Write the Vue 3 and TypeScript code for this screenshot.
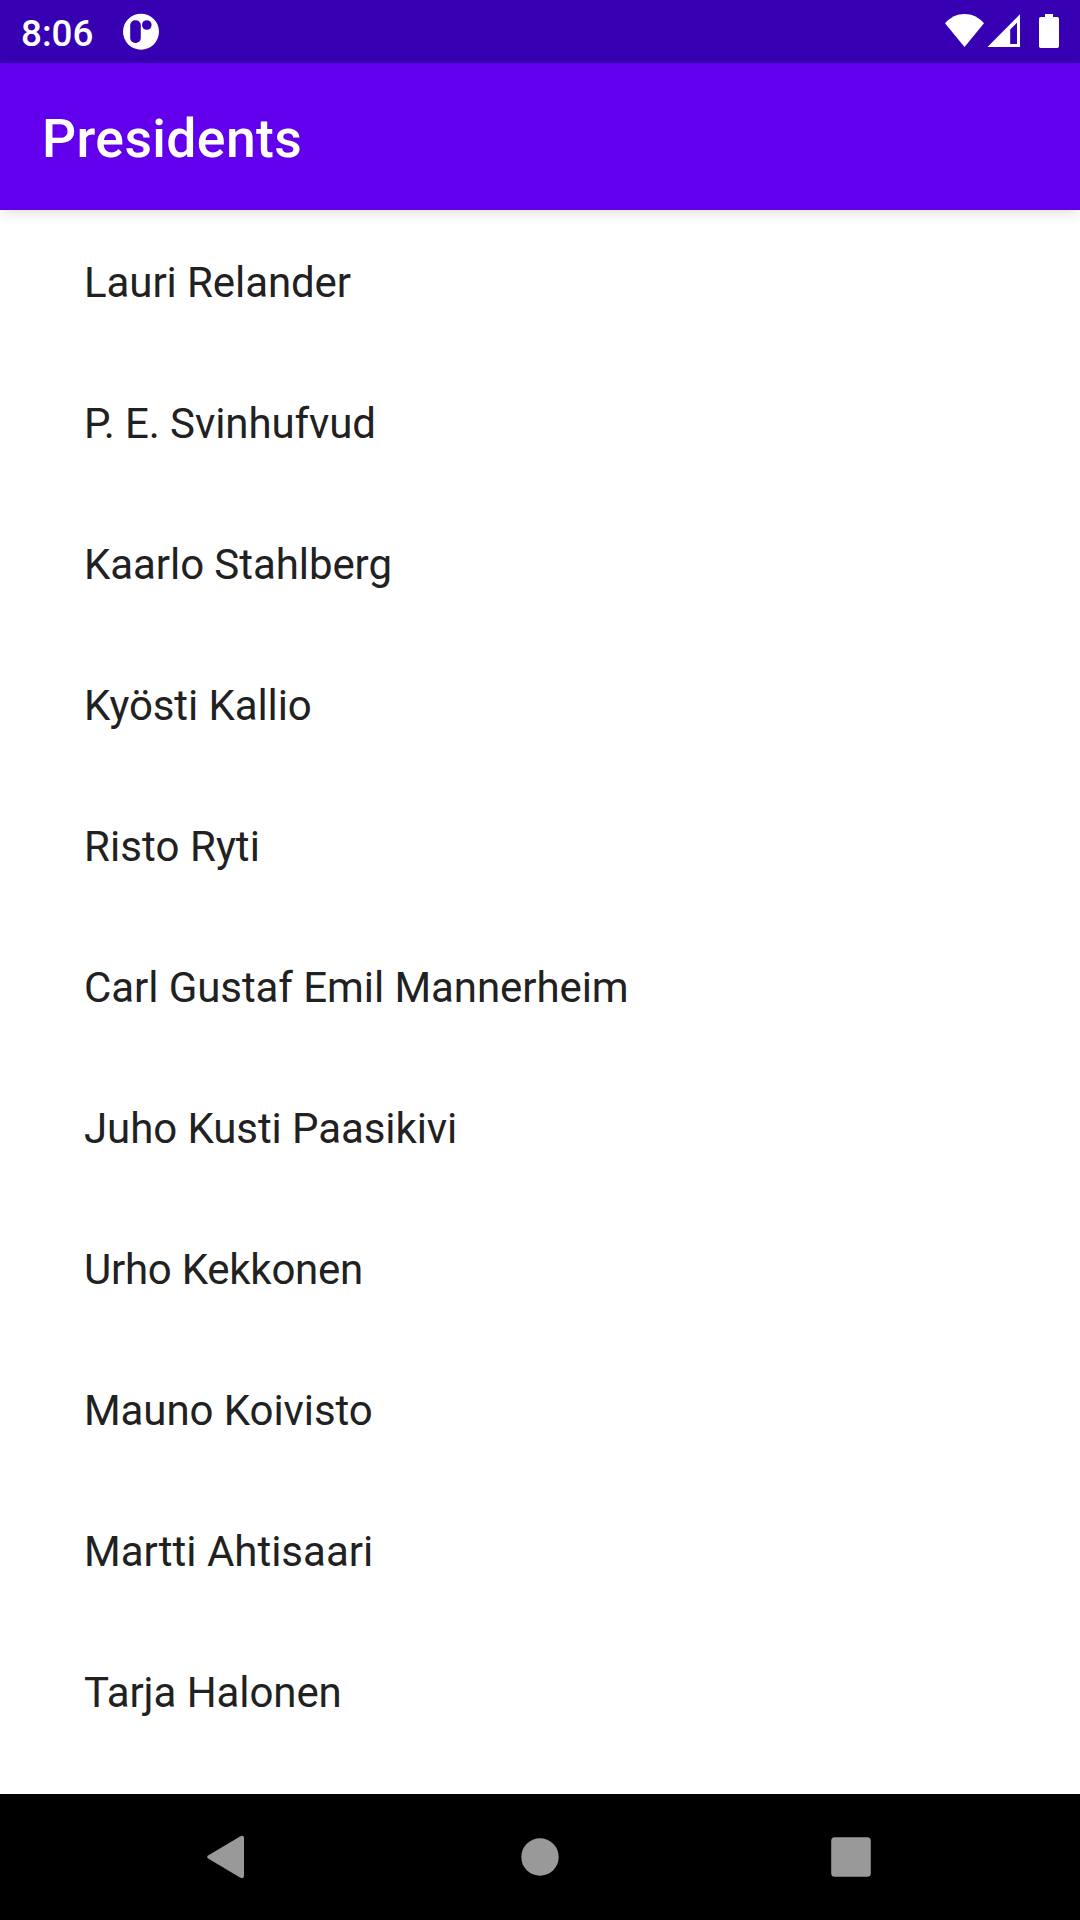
<script setup lang="ts">
interface President {
  name: string
  tracking: number
}

const presidents: President[] = [
  { name: 'Lauri Relander', tracking: -0.08 },
  { name: 'P. E. Svinhufvud', tracking: -0.1 },
  { name: 'Kaarlo Stahlberg', tracking: -0.07 },
  { name: 'Kyösti Kallio', tracking: -0.09 },
  { name: 'Risto Ryti', tracking: 0.08 },
  { name: 'Carl Gustaf Emil Mannerheim', tracking: -0.07 },
  { name: 'Juho Kusti Paasikivi', tracking: -0.08 },
  { name: 'Urho Kekkonen', tracking: -0.25 },
  { name: 'Mauno Koivisto', tracking: -0.07 },
  { name: 'Martti Ahtisaari', tracking: 0 },
  { name: 'Tarja Halonen', tracking: -0.08 },
]
</script>

<template>
  <div class="screen">
    <div class="status">
      <span class="time">8:06</span>
      <svg class="notif" width="38" height="38" viewBox="0 0 38 38">
        <circle cx="19" cy="18.700" r="18" fill="#fff" />
        <rect x="8.2" y="7.2" width="10.6" height="22.8" rx="5" fill="#3700b3" />
        <circle cx="24.8" cy="12" r="4.8" fill="#3700b3" />
      </svg>
      <svg class="indicators" width="120" height="40" viewBox="0 0 120 40">
        <path d="M5 11.2C10.500 5.200 17 2 24.500 2S38.500 5.200 44 11.200L24.500 35Z" fill="#fff" />
        <path fill-rule="evenodd" d="M47.500 35L80 2.300V35ZM70.200 17.500V32H77V10.700Z" fill="#fff" />
        <path d="M105 2H113V5H117.200Q119 5 119 6.800V34.200Q119 36 117.200 36H100.800Q99 36 99 34.200V6.800Q99 5 100.800 5H105Z" fill="#fff" />
      </svg>
    </div>
    <header class="toolbar">
      <h1>Presidents</h1>
    </header>
    <ul class="list">
      <li v-for="p in presidents" :key="p.name" :style="{ letterSpacing: `${p.tracking}px` }">{{ p.name }}</li>
    </ul>
    <nav class="navbar">
      <svg width="44" height="44" viewBox="0 0 44 44">
        <path d="M1.500 20.200L33 1.400Q37 -0.400 37 3.200V40.800Q37 44.400 33 42.600L1.500 23.800Q-1.200 22 1.500 20.200Z" fill="#999" />
      </svg>
      <svg width="44" height="44" viewBox="0 0 44 44">
        <circle cx="22" cy="22" r="18.700" fill="#999" />
      </svg>
      <svg width="44" height="44" viewBox="0 0 44 44">
        <rect x="2.200" y="2.200" width="39.600" height="39.600" rx="3.500" fill="#999" />
      </svg>
    </nav>
  </div>
</template>

<style>
body {
  margin: 0;
}
</style>

<style scoped>
.screen {
  display: flex;
  flex-direction: column;
  width: 1080px;
  height: 1920px;
  overflow: hidden;
  background: #fff;
  font-family: Roboto, sans-serif;
}
.status {
  display: flex;
  flex: none;
  height: 63px;
  box-sizing: border-box;
  padding: 0 20px 0 21px;
  background: #3700b3;
}
.time {
  width: 101px;
  color: #fff;
  font-size: 36.75px;
  font-weight: 500;
  line-height: 43px;
  padding-top: 12px;
}
.notif {
  margin-top: 13px;
}
.indicators {
  margin: 12px 0 0 auto;
}
.toolbar {
  display: flex;
  flex: none;
  align-items: center;
  height: 147px;
  box-sizing: border-box;
  padding: 4px 42px 0;
  background: #6200ee;
  box-shadow: 0 4px 14px -2px rgba(0, 0, 0, 0.14);
}
h1 {
  margin: 0;
  color: #fff;
  font-size: 53.5px;
  font-weight: 500;
  line-height: 63px;
  letter-spacing: 0.39px;
}
.list {
  flex: 1;
  margin: 0;
  padding: 0;
  list-style: none;
}
li {
  height: 141px;
  box-sizing: border-box;
  padding: 48px 84px 0;
  color: #212121;
  font-size: 42px;
  line-height: 49px;
}
.navbar {
  display: flex;
  flex: none;
  align-items: center;
  justify-content: center;
  gap: 267px;
  height: 126px;
  background: #000;
}
</style>
